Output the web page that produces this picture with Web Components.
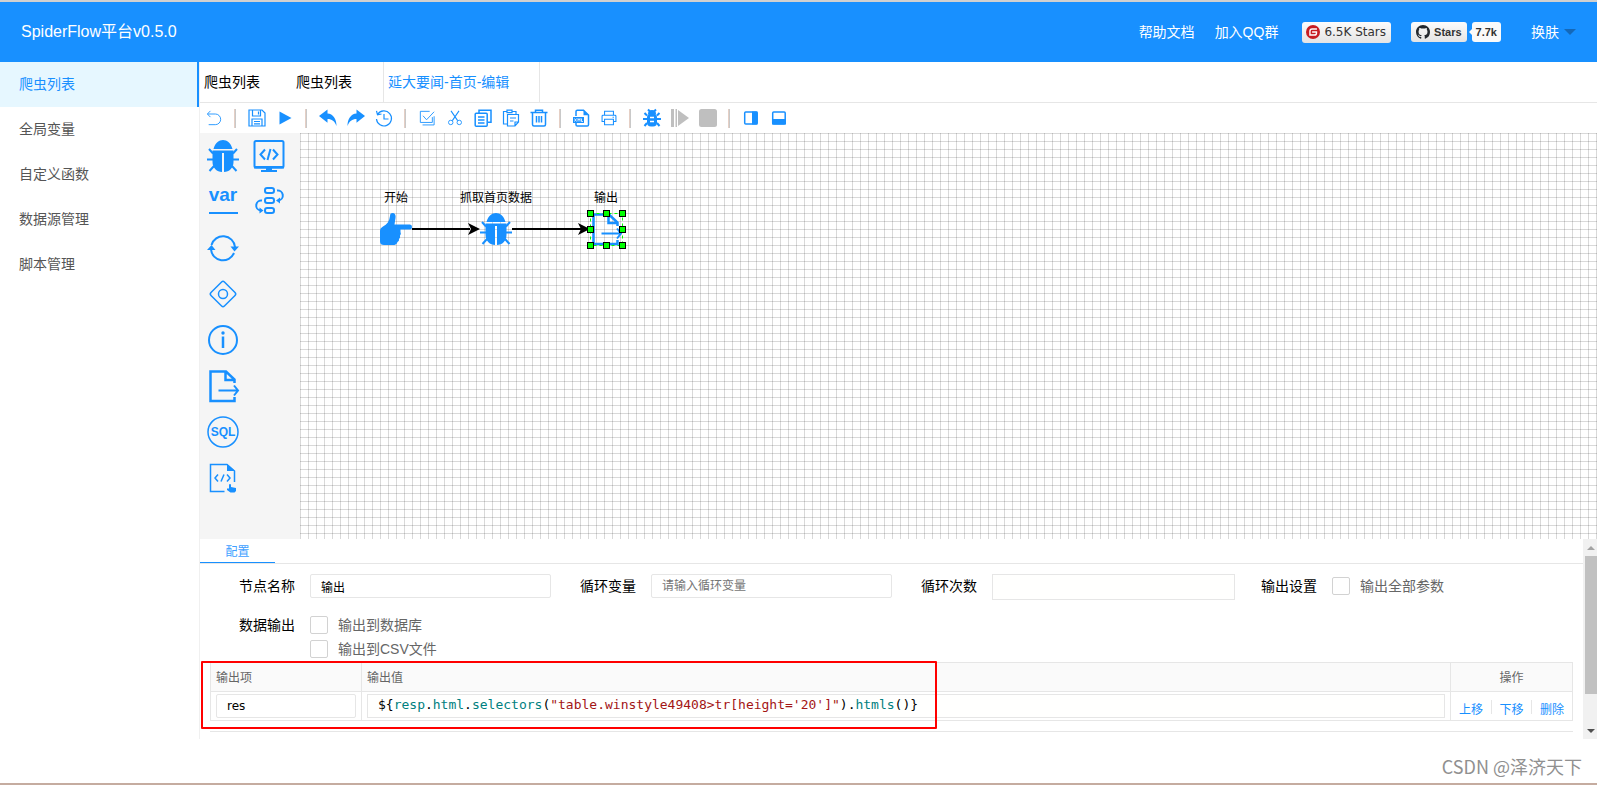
<!DOCTYPE html>
<html lang="zh-CN">
<head>
<meta charset="utf-8">
<title>SpiderFlow</title>
<style>
  html, body { margin: 0; height: 100%; }
  body {
    font: 14px/20px "Liberation Sans", "Noto Sans CJK SC", sans-serif;
    color: #000; background: #fff;
    --blue: #1890ff; --line: #e6e6e6;
  }
</style>
</head>
<body>
<spider-app></spider-app>

<script>
const ICONS = {
  /* 18-unit toolbar glyphs */
  back: [18, '<path d="M5 1 1.500 4.500 5 8M2 4.500h8.500a6 6 0 0 1 0 12H3" class="s1"/>'],
  save: [18, '<path d="M1 1h13l3 3v13H1zM4.500 1v6h8V1M10.500 2.500v3M4 17v-7h10v7M6 12.500h6M6 14.800h6" class="s12"/>'],
  play: [18, '<path d="M3.500 2.500 15.500 9 3.500 15.500z" class="f"/>'],
  undo: [18, '<path d="M0 7 8.500.500v4C14 5 17.500 9.500 17.500 17 15.500 12 13 10 8.500 10v3.700z" class="f"/>'],
  redo: [18, '<path d="M18 7 9.500.500v4C4 5 .500 9.500.500 17 2.500 12 5 10 9.500 10v3.700z" class="f"/>'],
  history: [18, '<path d="M2.600 5.500A7.500 7.500 0 1 1 1.500 10M1.500 1.800 2.500 5.800 6.500 5M9 5v5h4.500" class="s12"/>'],
  check: [18, '<path d="M12 1.500H1.500v12.500H15V8M4.500 6.500l4 4.500L17 2M4 16.800h13V7" class="s1"/>'],
  cut: [18, '<path d="M4.500 1 12 12M13.500 1 6 12" class="s12"/><circle cx="4.200" cy="14" r="2.500" class="s1"/><circle cx="13.800" cy="14" r="2.500" class="s1"/>'],
  copy: [18, '<path d="M5 4V1.200h12v12h-3" class="s15"/><rect x="1.200" y="4.200" width="12" height="13" rx="1" class="s15"/><path d="M4 8h6.500M4 11h6.500M4 14h6.500" class="s15"/>'],
  paste: [18, '<path d="M5 15H1.500V2.500H5M10 2.500h4V5M5 1.200h5v2.500H5zM5.500 5.500h11V13L13 17H5.500zM16.500 13H13v4M8 9h6M8 12h3.500" class="s12"/>'],
  trash: [18, '<path d="M.500 3.500h17M5.500 3.500V1.200h7v2.300M2.500 4v11.500q0 1.500 1.500 1.500h10q1.500 0 1.500-1.500V4M6.500 7v6.500M9 7v6.500M11.500 7v6.500" class="s15"/>'],
  xml: [18, '<path d="M4 7V2.500q0-1.300 1.300-1.300h6.200L16.500 6v9.700q0 1.300-1.300 1.300H5.300Q4 17 4 15.700V14" class="s15"/><path d="M11.500 1.200v5h5zM1 8h11v6H1z" class="f"/><path d="m2.500 9.500 2 3M4.500 9.500l-2 3M6 12.500v-3l1 1.500 1-1.500v3M9.500 9.500v3h1.500" fill="none" stroke="#fff" stroke-width=".8"/>'],
  print: [18, '<path d="M4 6V1.500h10V6M4 13H1.200V7q0-1 1-1h13.600q1 0 1 1v6H14M4 10.500h10v6H4zM13 8.200h1.500" class="s12"/>'],
  bug: [18, '<path d="M5 5a4 4 0 0 1 8 0z" class="f"/><rect x="4" y="4.500" width="10" height="13" rx="4" class="f"/><path d="m5 .500 2 2M13 .500l-2 2M1.500 4 4 6.500M16.500 4 14 6.500M0 10h18M1.500 17 4 14M16.500 17 14 14" class="s2"/><path d="M7 8.500h4M7 12.500h4" fill="none" stroke="#fff" stroke-width="1.500"/>'],
  step: [18, '<path d="M0 0h3v18H0zM4.500 0H6v18H4.500zM7 1l11 8L7 17z" class="f"/>'],
  stop: [18, '<rect width="18" height="18" rx="2.500" class="f"/>'],
  right: [18, '<rect x="2.700" y="3" width="12.500" height="12" rx="1" class="s15"/><path d="M10 2.500h5.500v13H10z" class="f"/>'],
  bottom: [18, '<rect x="2.700" y="3" width="12.500" height="12" rx="1" class="s15"/><path d="M2 10h14v5.500H2z" class="f"/>'],

  /* 32-unit palette and node glyphs */
  spider: [32, '<path d="M6.500 9C8 3 12 0 16 0s8 3 9.500 9zM5.500 10.500h21V22C26.500 28 22 32 17 32V13h-2v19C10 32 5.500 28 5.500 22z" class="f"/><path d="m2 9 4 4.500M30 9l-4 4.500M0 19.500h6M32 19.500h-6M2.500 31 7 26M29.500 31 25 26" class="s2"/>'],
  monitor: [32, '<rect x="1.500" y="1" width="29" height="26.500" rx="1.500" class="s2"/><path d="M1 26h30v2.500H1zM13 28h6v2h5v2H8v-2h5z" class="f"/><path d="m12 9.500-4.500 5 4.500 5M20 9.500l4.500 5-4.500 5M17.500 9l-3 11" class="s2"/>'],
  variable: [32, '<text x="16" y="15" text-anchor="middle" font-size="19" font-weight="700" class="f">var</text><path d="M2 27h29" class="s2"/>'],
  flow: [32, '<rect x="12" y="2" width="9" height="5" rx="2.200" class="s2"/><rect x="12" y="12" width="9" height="5" rx="2.200" class="s2"/><rect x="12" y="22" width="9" height="5" rx="2.200" class="s2"/><path d="M24 4.500a5 5 0 0 1 1.500 10M9 14.500a5 5 0 0 0-1.500 10" class="s2"/><path d="m23 14.500 4-3v6zM10.500 24.500l-4-3v6z" class="f"/>'],
  loop: [32, '<path d="M4.500 13A12 12 0 0 1 28 15M27 21A12 12 0 0 1 4 17.500" class="s2"/><path d="m23.500 14.500 4 5L32 14.500zM0 18l4.500-5 4 5z" class="f"/>'],
  diamond: [32, '<rect x="6.500" y="6.500" width="19" height="19" rx="2" transform="rotate(45 16 16)" class="s15"/><circle cx="16" cy="16" r="4.500" class="s15"/>'],
  info: [32, '<circle cx="16" cy="16" r="14" class="s2"/><path d="M16 12.500V24" class="s25"/><circle cx="16" cy="9" r="1.700" class="f"/>'],
  output: [32, '<path d="M27.500 13v-3.500L19 1.500H3.500v29.500h24V27M18.500 1.500V10h9" class="s25"/><path d="M11.500 20.500H31M27 15.500l4 5-4 5" class="s2"/>'],
  sql: [32, '<circle cx="16" cy="16" r="15" class="s15"/><text x="16" y="20" text-anchor="middle" font-size="12" font-weight="700" class="f">SQL</text>'],
  script: [32, '<path d="M27.500 20V9L20 2.500H3.500v27h14" class="s15"/><path d="M20 2v7h8zM22 22.500q1-1 2 0v2.500l5 1v3l-1.500 1.500h-4L20 28v-1.500h2z" class="f"/><path d="m11 12.500-3 3.500 3 3.500M20 12.500l3 3.500-3 3.500M17 12.500l-3 7" class="s15"/>'],
  hand: [32, '<path d="M12.500 0C15 0 16 2 15.500 5L14.500 11.500H30q2 0 2 2.500t-2 2.500H20.500v2.500q1 2-.500 3.500.700 2-1 3.500.500 2-1.500 3-.500 2.500-3 3H4Q0 32 0 28.500V17.500Q0 15 3 13.500C7 11.500 9.500 8 10 3Q10 0 12.500 0z" class="f"/>'],

  /* logos */
  github: [16, '<path class="f" d="M8 0C3.580 0 0 3.580 0 8c0 3.540 2.290 6.530 5.470 7.590.4.070.55-.17.55-.38 0-.19-.01-.82-.01-1.490-2.010.37-2.530-.49-2.690-.94-.09-.23-.48-.94-.82-1.130-.28-.15-.68-.52-.01-.53.63-.01 1.080.58 1.230.82.72 1.210 1.870.87 2.330.66.070-.52.28-.87.51-1.070-1.780-.2-3.640-.89-3.640-3.950 0-.87.31-1.590.82-2.150-.08-.2-.36-1.020.08-2.120 0 0 .67-.21 2.200.82.64-.18 1.320-.27 2-.27s1.360.09 2 .27c1.530-1.040 2.200-.82 2.200-.82.44 1.100.16 1.920.08 2.120.51.56.82 1.270.82 2.150 0 3.070-1.870 3.750-3.650 3.950.29.25.54.73.54 1.480 0 1.070-.01 1.930-.01 2.200 0 .21.15.46.55.38A8.010 8.010 0 0 0 16 8c0-4.420-3.580-8-8-8z"/>'],
  gitee: [16, '<circle cx="8" cy="8" r="8" class="f"/><path d="M12.500 4.500H7Q4.500 4.500 4.500 7v4.500h5q2.500 0 2.500-2.500V8H7" fill="none" stroke="#fff" stroke-width="1.600"/>'],
  caret: [12, '<path d="M0 3h12L6 9z" class="f"/>']
};

function define(name, html, setup) {
  const tpl = document.createElement('template');
  tpl.innerHTML = html;
  customElements.define(name, class extends HTMLElement {
    constructor() {
      super();
      this.attachShadow({ mode: 'open' }).append(tpl.content.cloneNode(true));
    }
    connectedCallback() { if (setup) setup(this, this.shadowRoot); }
  });
}

define('sf-icon', `
<style>
  :host { display: inline-block; width: var(--size, 18px); height: var(--size, 18px); color: var(--blue); flex: none; }
  span { display: contents; }
  svg { display: block; width: 100%; height: 100%; overflow: visible; }
  .f { fill: currentColor; }
  .s1, .s12, .s15, .s2, .s25 { fill: none; stroke: currentColor; stroke-width: 1; }
  .s12 { stroke-width: 1.200; } .s15 { stroke-width: 1.500; } .s2 { stroke-width: 2; } .s25 { stroke-width: 2.500; }
</style><span></span>`, (el, root) => {
  const [box, body] = ICONS[el.getAttribute('name')];
  root.querySelector('span').innerHTML = `<svg viewBox="0 0 ${box} ${box}" aria-hidden="true">${body}</svg>`;
});

define('sf-header', `
<style>
  :host { display: flex; align-items: center; height: 60px; padding: 0 21px; background: var(--blue); color: #fff; border-top: 2px solid #d0d0d0; }
  h1 { margin: 0 auto 0 0; font-size: 16px; font-weight: 400; line-height: 24px; }
  nav { display: flex; align-items: center; }
  a { color: inherit; text-decoration: none; margin-right: 20px; white-space: nowrap; }
  .badge { display: flex; align-items: center; box-sizing: border-box; height: 20px; border-radius: 3px; color: #333; background: linear-gradient(#fcfcfc, #e4e4e4); font-size: 11px; line-height: 20px; }
  .gitee { height: 21px; padding: 0 5px 0 4px; margin: 0 20px 0 4px; gap: 4px; font-family: "DejaVu Sans"; font-size: 12px; }
  .gitee sf-icon { --size: 14px; color: #c71d23; }
  .github { padding: 0 5px; gap: 4px; margin-right: 5px; font-weight: 700; }
  .github sf-icon { --size: 14px; color: #24292e; }
  .count { position: relative; padding: 0 4px; margin-right: 30px; background: #fafafa; font-weight: 700; }
  .count::before { content: ""; position: absolute; left: -3px; top: 7px; border: solid transparent; border-width: 3px 3px 3px 0; border-right-color: #fafafa; }
  button { display: flex; align-items: center; gap: 5px; padding: 0; border: 0; background: none; color: inherit; font: inherit; }
  button sf-icon { --size: 12px; color: #1468b8; }
</style>
<h1>SpiderFlow平台v0.5.0</h1>
<nav>
  <a href="#">帮助文档</a><a href="#">加入QQ群</a>
  <a href="#" class="badge gitee"><sf-icon name="gitee"></sf-icon>6.5K Stars</a>
  <a href="#" class="badge github"><sf-icon name="github"></sf-icon>Stars</a>
  <a href="#" class="badge count">7.7k</a>
  <button type="button">换肤<sf-icon name="caret"></sf-icon></button>
</nav>`);

define('sf-menu', `
<style>
  :host { display: block; flex: none; width: 199px; }
  ::slotted(a) { display: block; padding: 0 19px; line-height: 44px; margin-bottom: 1px; color: #555; text-decoration: none; }
  ::slotted(a[aria-current]) { padding-bottom: 1px; margin: 0; color: var(--blue); background: #e6f7ff; border-right: 2px solid var(--blue); }
</style><nav><slot></slot></nav>`);

define('sf-tabs', `
<style>
  :host { display: flex; height: 40px; border-bottom: 1px solid var(--line); }
  ::slotted(button) { box-sizing: border-box; padding: 0 32px 0 4px; border: 0; background: none; font: inherit; color: #000; }
  ::slotted(button[aria-selected=true]) { margin-left: -1px; padding: 0 30px 0 4px; border: solid var(--line); border-width: 0 1px; color: var(--blue); }
</style><slot></slot>`);

define('sf-toolbar', `
<style>
  :host { display: flex; align-items: center; height: 30px; }
  button { display: grid; place-items: center; width: 28px; height: 30px; padding: 0; border: 0; background: none; }
  button:disabled sf-icon { color: #bfbfbf; }
  i { width: 2px; height: 19px; margin: 0 7px 0 6px; background: linear-gradient(90deg, #e5cfc5 50%, #c9c9c9 50%); }
  i.tight { margin-right: 6px; }
  .small { --size: 16px; }
</style>`, (el, root) => {
  const names = 'back:返回 | save:保存 play:运行 | undo:撤销 redo:重做 history:历史 | check:全选 cut:剪切 copy:复制 paste:粘贴 trash:删除 ! xml:XML print:打印 | bug:调试 step:单步 stop:停止 | right:右侧 bottom:底部';
  for (const token of names.split(' ')) {
    if (token === '|' || token === '!') {
      const sep = document.createElement('i');
      if (token === '!') sep.className = 'tight';
      root.append(sep);
      continue;
    }
    const [icon, title] = token.split(':');
    const b = document.createElement('button');
    b.type = 'button'; b.ariaLabel = title;
    b.disabled = icon === 'step' || icon === 'stop';
    b.innerHTML = `<sf-icon name="${icon}"${/back|print|check|cut/.test(icon) ? ' class="small"' : ''}></sf-icon>`;
    root.append(b);
  }
});

define('sf-palette', `
<style>
  :host { display: grid; grid-template-columns: 46px 46px; grid-auto-rows: 46px; box-sizing: border-box; width: 100px; flex: none; background: #f5f5f5; --size: 32px; }
  button { display: grid; place-items: center; padding: 0; border: 0; background: none; }
  .first { grid-column: 1; }
</style>`, (el, root) => {
  'spider monitor variable flow loop diamond info output sql script'.split(' ').forEach((n, i) => {
    const b = document.createElement('button');
    b.type = 'button'; b.ariaLabel = n;
    if (i > 3) b.className = 'first';
    b.innerHTML = `<sf-icon name="${n}"></sf-icon>`;
    root.append(b);
  });
});

define('sf-node', `
<style>
  :host { position: absolute; display: flex; flex-direction: column; align-items: center; width: 100px; font-size: 12px; line-height: 16px; gap: 7px; --size: 32px; }
  div { height: 32px; }
</style><slot></slot><div></div>`, (el, root) => {
  root.querySelector('div').innerHTML = `<sf-icon name="${el.getAttribute('icon')}"></sf-icon>`;
});

define('sf-canvas', `
<style>
  :host { display: block; position: relative; flex: 1; overflow: hidden;
    background: linear-gradient(90deg, rgba(0,0,0,.15) 1px, transparent 1px) 0 0 / 8px 8px, linear-gradient(rgba(0,0,0,.15) 1px, transparent 1px) 0 0 / 8px 8px #fff; }
  svg { position: absolute; left: 0; top: 0; width: 400px; height: 200px; }
  .n1 { left: 46px; top: 57px; } .n2 { left: 146px; top: 57px; } .n3 { left: 256px; top: 57px; }
</style>
<sf-node class="n1" icon="hand">开始</sf-node>
<sf-node class="n2" icon="spider">抓取首页数据</sf-node>
<sf-node class="n3" icon="output">输出</sf-node>
<svg viewBox="0 0 400 200" aria-hidden="true">
  <path d="M112 96h58M212 96h70" stroke="#000" stroke-width="2"/>
  <path d="m180 96-12-6 3 6-3 6zM290 96l-12-6 3 6-3 6z"/>
  <rect x="290.500" y="80.500" width="32" height="32" fill="none" stroke="#0f0" stroke-dasharray="3 3"/>
  <g fill="#0f0" stroke="#000" id="handles"></g>
</svg>`, (el, root) => {
  let out = '';
  for (const y of [77, 93, 109]) for (const x of [287, 303, 319])
    if (x !== 303 || y !== 93) out += `<rect x="${x}.5" y="${y}.5" width="6" height="6"/>`;
  root.getElementById('handles').innerHTML = out;
});

define('sf-check', `
<style>
  :host { display: block; color: #666; }
  label { display: flex; align-items: center; gap: 10px; line-height: 24px; }
  input { appearance: none; box-sizing: border-box; width: 18px; height: 18px; margin: 0; border: 1px solid #d2d2d2; border-radius: 2px; background: #fff; }
</style><label><input type="checkbox"><span><slot></slot></span></label>`);

define('sf-text', `
<style>
  :host { display: flex; align-items: flex-start; gap: 15px; }
  label:empty { display: none; }
  label { white-space: nowrap; line-height: 24px; }
  input { flex: 1; min-width: 0; box-sizing: border-box; height: 24px; padding: 0 10px; border: 1px solid var(--line); border-radius: 2px; font: 12px/16px "Liberation Sans", "Noto Sans CJK SC", sans-serif; color: #000; background: #fff; outline: 0; }
  :host([wide]) input { font-family: "DejaVu Sans", sans-serif; font-size: 12px; }
  :host([code]) input { height: 26px; border-radius: 0; background: #fffffe; }
  input::placeholder { color: #757575; }
</style><label for="f"></label><input id="f" type="text">`, (el, root) => {
  const input = root.querySelector('input');
  root.querySelector('label').textContent = el.getAttribute('label') || '';
  if (!el.getAttribute('label')) input.ariaLabel = el.getAttribute('hint');
  input.value = el.getAttribute('value') || '';
  input.placeholder = el.getAttribute('placeholder') || '';
});

define('sf-output-table', `
<style>
  :host { display: block; position: relative; margin: 1px 10px 0; border-bottom: 1px solid var(--line); padding-bottom: 10px; }
  table { width: 100%; border-collapse: collapse; table-layout: fixed; font-size: 12px; line-height: 16px; color: #666; }
  th { height: 27px; padding: 1px 5px 0; font-weight: 400; text-align: left; background: #fafafa; }
  th, td { border: 1px solid var(--line); }
  td { height: 28px; padding: 0 5px; }
  .item { width: 140px; } .ops { width: 111px; text-align: center; }
  .code { box-sizing: border-box; height: 24px; padding: 0 10px; border: 1px solid var(--line); background: #fffffe; color: #000; font: 13px/20px "DejaVu Sans Mono", monospace; white-space: pre; overflow: hidden; }
  .v { color: #008080; } .s { color: #a31515; }
  .links { display: flex; justify-content: space-between; padding: 7px 3px 0; }
  .links a { color: var(--blue); text-decoration: none; line-height: 20px; }
  .links i { width: 1px; height: 14px; background: var(--line); }
  .mark { position: absolute; left: -9px; top: -1px; width: 732px; height: 64px; border: 2px solid #f00; border-radius: 1px; pointer-events: none; }
</style>
<table>
  <thead><tr><th class="item">输出项</th><th>输出值</th><th class="ops">操作</th></tr></thead>
  <tbody><tr>
    <td><sf-text wide hint="输出项" value="res"></sf-text></td>
    <td><div class="code" role="textbox" aria-label="输出值" contenteditable="true" spellcheck="false">\${<span class="v">resp</span>.<span class="v">html</span>.<span class="v">selectors</span>(<span class="s">"table.winstyle49408&gt;tr[height='20']"</span>).<span class="v">htmls</span>()}</div></td>
    <td><div class="links"><a href="#">上移</a><i></i><a href="#">下移</a><i></i><a href="#">删除</a></div></td>
  </tr></tbody>
</table>
<div class="mark"></div>`);

define('sf-scrollbar', `
<style>
  :host { display: flex; flex-direction: column; align-items: flex-end; width: 14px; background: #f1f1f1; flex: none; }
  span { height: 17px; width: 12px; display: grid; place-items: center; }
  span::before { content: ""; border: solid transparent; border-width: 0 4px 4px; border-bottom-color: #a3a3a3; }
  span.down::before { border-width: 4px 4px 0; border-top-color: #505050; }
  div { flex: 1; width: 12px; }
  div::before { content: ""; display: block; height: 83%; background: #c1c1c1; }
</style><span></span><div></div><span class="down"></span>`);

define('sf-config', `
<style>
  :host { display: flex; height: 200px; flex: none; }
  .body { flex: 1; min-width: 0; }
  .tabs { height: 24px; border-bottom: 1px solid var(--line); }
  .tabs button { box-sizing: border-box; width: 75px; height: 24px; padding: 2px 0 0; border: 0; border-bottom: 1px solid var(--blue); background: none; color: #40a0ff; font: inherit; font-size: 12px; }
  .row { display: grid; grid-template-columns: 341fr 341fr 340fr 322fr; padding: 10px 0 0 39px; height: 26px; }
  .row sf-text { margin-right: 29px; align-self: start; }
  .row sf-text[code] { margin-right: 26px; }
  .field { display: flex; gap: 15px; }
  .field > span { line-height: 24px; }
  .data { padding: 13px 0 0 39px; }
</style>
<div class="body">
  <div class="tabs" role="tablist"><button type="button" role="tab" aria-selected="true">配置</button></div>
  <div class="row">
    <sf-text label="节点名称" value="输出"></sf-text>
    <sf-text label="循环变量" placeholder="请输入循环变量"></sf-text>
    <sf-text label="循环次数" code></sf-text>
    <div class="field"><span>输出设置</span><sf-check>输出全部参数</sf-check></div>
  </div>
  <div class="field data"><span>数据输出</span><div><sf-check>输出到数据库</sf-check><sf-check>输出到CSV文件</sf-check></div></div>
  <sf-output-table></sf-output-table>
</div>
<sf-scrollbar></sf-scrollbar>`);

define('spider-app', `
<style>
  :host { display: flex; flex-direction: column; min-height: 100vh; }
  .cols { display: flex; flex: 1; }
  main { flex: 1; min-width: 0; display: flex; flex-direction: column; border-left: 1px solid #f0f0f0; }
  .work { display: flex; flex: 1; min-height: 406px; }
  footer { display: flex; justify-content: flex-end; height: 44px; padding-right: 15px; border-bottom: 2px solid #c5aca0; font: 18px/54px "Noto Sans CJK SC", sans-serif; color: #909090; }
</style>
<sf-header></sf-header>
<div class="cols">
  <sf-menu>
    <a href="#" aria-current="page">爬虫列表</a><a href="#">全局变量</a><a href="#">自定义函数</a><a href="#">数据源管理</a><a href="#">脚本管理</a>
  </sf-menu>
  <main>
    <sf-tabs role="tablist">
      <button type="button" role="tab">爬虫列表</button><button type="button" role="tab">爬虫列表</button><button type="button" role="tab" aria-selected="true">延大要闻-首页-编辑</button>
    </sf-tabs>
    <sf-toolbar></sf-toolbar>
    <div class="work"><sf-palette></sf-palette><sf-canvas></sf-canvas></div>
    <sf-config></sf-config>
  </main>
</div>
<footer>CSDN @泽济天下</footer>`);
</script>
</body>
</html>
